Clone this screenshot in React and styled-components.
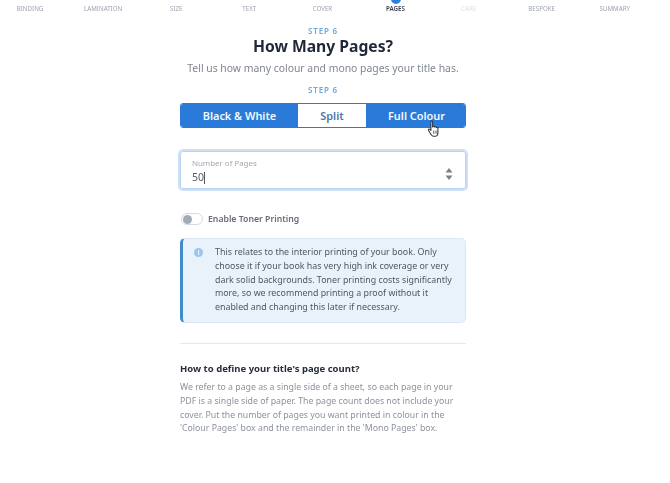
import React from "react";
import styled, { createGlobalStyle } from "styled-components";

const Global = createGlobalStyle`
  html, body { margin: 0; padding: 0; background: #fff; }
  body { font-family: "Noto Sans", "Open Sans", sans-serif; overflow: hidden; }
`;
const Page = styled.div`
  width: 670px;
  height: 483px;
  overflow: hidden;
  filter: blur(0.4px);
`;
const Steps = styled.nav`
  display: grid;
  grid-template-columns: repeat(9, 73.1px);
  margin-left: -6.5px;
  height: 16px;
`;
const StepItem = styled.div`
  position: relative;
  text-align: center;
  font-size: 6.2px;
  line-height: 9px;
  padding-top: 4px;
  color: ${(p) => (p.$state === "active" ? "#3a4152" : p.$state === "off" ? "#dfe1e6" : "#9da3b0")};
  font-weight: ${(p) => (p.$state === "active" ? 600 : 400)};
`;
const StepDot = styled.span`
  position: absolute;
  top: -6px;
  left: 50%;
  margin-left: -5px;
  width: 10px;
  height: 10px;
  border-radius: 50%;
  background: #2f80d8;
`;
const Main = styled.main`
  width: 286px;
  margin: 0 0 0 180px;
  display: flex;
  flex-direction: column;
`;
const Eyebrow = styled.div`
  text-align: center;
  font-size: 8px;
  line-height: 12px;
  font-weight: 600;
  letter-spacing: 0.8px;
  color: #6ba8dc;
  margin-top: ${(p) => p.$top || 0}px;
`;
const Title = styled.h1`
  margin: -1px 0 0;
  text-align: center;
  font-size: 15.7px;
  line-height: 20px;
  font-weight: 700;
  color: #1f2738;
  white-space: nowrap;
`;
const Sub = styled.p`
  margin: 4px -20px 8px;
  text-align: center;
  font-size: 10.4px;
  line-height: 16px;
  color: #7f8592;
  white-space: nowrap;
`;
const Segments = styled.div`
  display: grid;
  grid-template-columns: 117px 68px 101px;
  height: 25px;
  margin-top: 7px;
  border-radius: 3px;
  overflow: hidden;
  border: 1px solid #2a7bd9;
  box-sizing: border-box;
`;
const Segment = styled.button`
  border: 0;
  padding: 0;
  font: 600 10.9px "Noto Sans", sans-serif;
  background: ${(p) => (p.$on ? "#2a7bd9" : "#fff")};
  color: ${(p) => (p.$on ? "#f3f8fe" : "#4d77ab")};
`;
const Field = styled.div`
  position: relative;
  margin-top: 23px;
  height: 38px;
  box-sizing: border-box;
  padding: 6px 11px 0;
  border: 1px solid #b9d1f1;
  border-radius: 3px;
  box-shadow: 0 0 0 2px #cfe0f6;
`;
const FieldLabel = styled.div`
  font-size: 7.9px;
  line-height: 10px;
  color: #a3a8b2;
`;
const FieldValue = styled.div`
  display: flex;
  align-items: center;
  font-size: 10.5px;
  line-height: 15px;
  margin-top: 2px;
  color: #565c68;
`;
const Caret = styled.span`
  width: 1px;
  height: 12px;
  background: #555;
`;
const Spinner = styled.svg`
  position: absolute;
  right: 12px;
  top: 15px;
`;
const ToggleRow = styled.div`
  display: flex;
  align-items: center;
  gap: 5px;
  margin: 24px 0 0 1px;
`;
const Toggle = styled.span`
  display: flex;
  align-items: center;
  width: 22px;
  height: 12px;
  box-sizing: border-box;
  padding-left: 1px;
  border: 1px solid #d5d9e2;
  border-radius: 6px;
`;
const Knob = styled.span`
  width: 9px;
  height: 9px;
  border-radius: 50%;
  background: #a3aab8;
`;
const ToggleLabel = styled.span`
  font-size: 8.7px;
  line-height: 12px;
  font-weight: 600;
  color: #666c78;
`;
const Notice = styled.div`
  display: flex;
  gap: 12px;
  margin-top: 13px;
  height: 85px;
  box-sizing: border-box;
  padding: 7px 10px 0 11px;
  background: #e9f1fb;
  border: 1px solid #dbe7f6;
  border-left: 3px solid #3f8ecb;
  border-radius: 5px;
`;
const InfoIcon = styled.span`
  flex: none;
  width: 9px;
  height: 9px;
  margin-top: 2px;
  border-radius: 50%;
  background: #9cc5ec;
  color: #e9f1fb;
  font-size: 7px;
  line-height: 9px;
  text-align: center;
  font-weight: 700;
`;
const NoticeText = styled.p`
  margin: 0;
  font-size: 8.85px;
  line-height: 13.8px;
  color: #505663;
  white-space: pre;
`;
const Rule = styled.hr`
  width: 100%;
  margin: 20px 0 0;
  border: 0;
  border-top: 1px solid #e6e8ec;
`;
const HelpTitle = styled.h2`
  margin: 18px 0 0;
  font-size: 9.5px;
  line-height: 14px;
  font-weight: 700;
  color: #272d3a;
  white-space: nowrap;
`;
const HelpText = styled.p`
  margin: 5px 0 0;
  font-size: 8.75px;
  line-height: 13.8px;
  color: #8d929e;
  white-space: pre;
`;
const Cursor = styled.svg`
  position: absolute;
  left: 427px;
  top: 120px;
`;

const steps = [
  ["BINDING"], ["LAMINATION"], ["SIZE"], ["TEXT"], ["COVER"],
  ["PAGES", "active"], ["CARE", "off"], ["BESPOKE"], ["SUMMARY"],
];

export default function App() {
  return (
    <Page>
      <Global />
      <Steps>
        {steps.map(([name, state]) => (
          <StepItem key={name} $state={state}>
            {state === "active" && <StepDot />}
            {name}
          </StepItem>
        ))}
      </Steps>
      <Main>
        <Eyebrow $top={9}>STEP 6</Eyebrow>
        <Title>How Many Pages?</Title>
        <Sub>Tell us how many colour and mono pages your title has.</Sub>
        <Eyebrow>STEP 6</Eyebrow>
        <Segments>
          <Segment $on>Black &amp; White</Segment>
          <Segment>Split</Segment>
          <Segment $on>Full Colour</Segment>
        </Segments>
        <Field>
          <FieldLabel>Number of Pages</FieldLabel>
          <FieldValue>50<Caret /></FieldValue>
          <Spinner width="8" height="14" viewBox="0 0 8 14">
            <path d="M4 1 L7.5 5.5 H0.5 Z M0.5 8.5 H7.5 L4 13 Z" fill="#7b808b" />
          </Spinner>
        </Field>
        <ToggleRow>
          <Toggle><Knob /></Toggle>
          <ToggleLabel>Enable Toner Printing</ToggleLabel>
        </ToggleRow>
        <Notice>
          <InfoIcon>i</InfoIcon>
          <NoticeText>{"This relates to the interior printing of your book. Only\nchoose it if your book has very high ink coverage or very\ndark solid backgrounds. Toner printing costs significantly\nmore, so we recommend printing a proof without it\nenabled and changing this later if necessary."}</NoticeText>
        </Notice>
        <Rule />
        <HelpTitle>How to define your title's page count?</HelpTitle>
        <HelpText>{"We refer to a page as a single side of a sheet, so each page in your\nPDF is a single side of paper. The page count does not include your\ncover. Put the number of pages you want printed in colour in the\n'Colour Pages' box and the remainder in the 'Mono Pages' box."}</HelpText>
      </Main>
      <Cursor width="14" height="18" viewBox="0 0 13 17">
        <path d="M3.6 1.6c0-.8 1.6-.8 1.6 0v5l.3-.2c.4-.6 1.5-.4 1.6.3.4-.5 1.5-.3 1.6.4.5-.4 1.5-.1 1.5.7v4.2c0 1.8-1 3.4-2.8 3.4H6.2c-1.2 0-1.9-.7-2.5-1.7L1.3 9.6c-.4-.8.5-1.5 1.2-.9l1.1 1.1Z" fill="#fff" stroke="#333" strokeWidth="1" strokeLinejoin="round" />
        <path d="M6 10v3M7.6 10v3M9.2 10v3" stroke="#333" strokeWidth=".6" />
      </Cursor>
    </Page>
  );
}
